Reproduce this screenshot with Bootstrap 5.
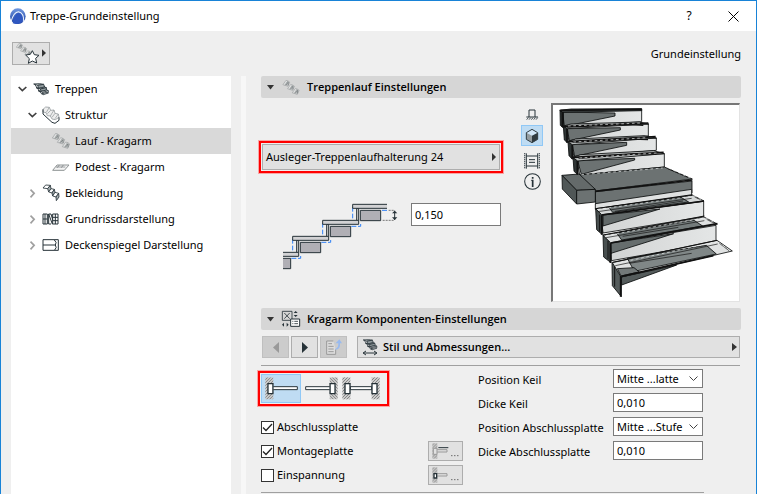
<!DOCTYPE html>
<html lang="de">
<head>
<meta charset="utf-8">
<meta name="viewport" content="width=device-width, initial-scale=1">
<title>Treppe-Grundeinstellung</title>
<link href="https://cdn.jsdelivr.net/npm/bootstrap@5.3.0/dist/css/bootstrap.min.css" rel="stylesheet">
<style>
body{font:11px/16px "Noto Sans","Open Sans",sans-serif;color:#000;background:#efefef}
button,input,select{font:inherit;color:inherit}
svg{display:block;flex:none;overflow:visible}
.dialog{border:solid #1883d7;border-width:1px 1px 0;overflow:hidden}
.titlebar{height:30px;padding:0 11px 0 9px;gap:4px}
.titlebar h1{font-size:11px;line-height:16px;margin:0}
.win-btn{width:24px;height:24px;border:0;background:none;padding:0;display:flex;align-items:center;justify-content:center;font-size:12px}
.toolbar{height:45px;padding:0 15px 0 11px}
.flat{background:#e1e1e1;border:1px solid #adadad;border-radius:0;padding:0;color:#000;font-size:11px;line-height:16px;display:flex;align-items:center}
.flat:disabled{background:#ccc;border-color:#bfbfbf;opacity:1}
.fav{width:38px;height:23px;padding-left:3px}
.panes{padding:0 15px 0 10px;gap:10px}
.tree{width:220px;background:#fff}
.tree button{width:100%;height:26px;border:0;background:none;padding:0 0 0 7px;display:flex;align-items:center;text-align:left;gap:5px}
.tree .lvl2{padding-left:17px}
.tree .lvl3{padding-left:41px}
.tree .lvl3.chosen{background:#d9d9d9}
.splitter{width:5px;background:#f7f7f7}
.settings{padding-left:5px}
.section-head,.comp-bar .style-btn{font-family:"Open Sans","Noto Sans",sans-serif;font-weight:600}
.section-head{height:22px;background:#d6d6d6;border:0;border-radius:2px;width:100%;padding:0 5px;display:flex;align-items:center;gap:7px}
.run{height:210px;padding:5px 1px 0 0;gap:8px}
.run-left{padding-top:38px}
.marked{border:2px solid #f00;box-shadow:0 0 0 1px #f9a5a5;padding:1px;margin-left:-2px}
.picker{width:238px;height:26px;padding:0 3px;justify-content:space-between}
.picker-frame{width:244px}
.height-row{padding:30px 0 0 20px;gap:12px}
.field{width:90px;height:19px;border:1px solid #7a7a7a;border-radius:0;background-color:#fff;padding:0 3px;color:#000;font-size:11px;line-height:16px}
.field.tall{height:23px}
select.field{background-size:9px 6px;background-position:right 4px center;padding-right:14px;
background-image:url("data:image/svg+xml,%3Csvg xmlns='http://www.w3.org/2000/svg' viewBox='0 0 9 6'%3E%3Cpath d='M.5 .5 4.500 4.500 8.500 .5' fill='none' stroke='%23444'/%3E%3C/svg%3E")}
.views{width:22px;padding-top:1px}
.views button{width:22px;height:21px;border:1px solid transparent;background:none;padding:0;display:flex;align-items:center;justify-content:center}
.views button.chosen,.ends button.chosen{background:#bfdcf3;border-color:#90c8f6}
.preview{height:199px;width:189px;background:#fff;border:2px solid #777;border-right-color:#e3e3e3;border-bottom-color:#e3e3e3;border-right-width:1px;border-bottom-width:1px}
.comp-bar{height:35px;padding:6px 1px 0 1px;gap:2px;align-items:flex-start}
.comp-bar .step{width:27px;height:22px;justify-content:center}
.comp-bar .style-btn{height:22px;margin-left:8px;padding:0 2px 0 4px;gap:5px}
.rule{height:1px;background:#a0a0a0;margin-right:1px}
.comp{padding:3px 38px 0 0}
.ends{width:131px;height:35px;margin:2px 0 0 -3px}
.ends button{width:40px;height:29px;border:1px solid transparent;background:none;padding:0;display:flex;align-items:center;justify-content:center}
.checks{padding:9px 15px 0 0}
.check-row{height:24px}
.check-row label{padding-left:3px}
.check-row .form-check-input{width:13px;height:13px;margin:0;border:1px solid #333;border-radius:0;background-color:#fff}
.check-row .form-check-input:checked{background-size:11px 11px;background-image:url("data:image/svg+xml,%3Csvg xmlns='http://www.w3.org/2000/svg' viewBox='0 0 11 11'%3E%3Cpath d='M1 5.500 4 8.500 10 2' fill='none' stroke='%23222' stroke-width='1.300'/%3E%3C/svg%3E")}
.more{width:35px;height:20px;padding:0 2px 0 3px;justify-content:space-between}
.props{display:grid;grid-template-columns:135px 90px;grid-auto-rows:24px}
.props label{padding-top:3px;white-space:nowrap}
.last-rule{margin-right:37px;margin-top:5px}
</style>
<script src="https://cdn.jsdelivr.net/npm/bootstrap@5.3.0/dist/js/bootstrap.bundle.min.js"></script>
</head>
<body>
<svg width="0" height="0" class="position-absolute" aria-hidden="true">
<defs>
<pattern id="hatch" width="9" height="9" patternUnits="userSpaceOnUse"><rect width="9" height="9" fill="#ccc"/><path d="M-3 12 12-3M-3 3 3-3M6 12 12 6" stroke="#777" stroke-width="2.500"/></pattern>
<symbol id="arms" viewBox="0 0 54 48">
<g id="arm" fill="none" stroke="#9b9fa0" stroke-width="2" stroke-linejoin="round"><path d="M1 15 11 1 17 3 8 17Z" fill="#dfe1e1"/><path d="M17 3 23 7 17 20 8 17Z" fill="#c6c9c9"/><path d="M11 16 18 7V17" stroke="#656c6e"/></g>
<use href="#arm" x="15" y="13"/><use href="#arm" x="30" y="26"/>
</symbol>
<symbol id="open" viewBox="0 0 27 18"><path d="M2 3 13 14 25 3" fill="none" stroke="#404040" stroke-width="5"/></symbol>
<symbol id="closed" viewBox="0 0 18 27"><path d="M3 2 14 13 3 25" fill="none" stroke="#a0a0a0" stroke-width="5"/></symbol>
<symbol id="flight" viewBox="0 0 48 39"><g fill="#d3d8d9" stroke="#263238" stroke-width="2.500" stroke-linejoin="round"><path d="M2 3 20 2 32 4 14 7Z"/><path d="M14 7 32 4 35 12 17 16Z" fill="#929c9f"/><path d="M9 14 17 16 35 12 40 14 22 18Z"/><path d="M22 18 40 14 41 21 24 25Z" fill="#929c9f"/><path d="M15 23 24 25 41 21 46 23 29 28Z"/><path d="M25 32 42 28 46 30 31 35Z"/><path d="M29 28 31 34M46 23V29M5 4 24 31" fill="none"/></g></symbol>
<symbol id="wallbeam" viewBox="0 0 100 69"><rect x="1" y="1" width="24" height="66" fill="url(#hatch)"/><path d="M25 29H98V38H25" fill="#fff" stroke="#263238" stroke-width="3"/><path d="M9 20H24V50H9Z" fill="#fff" stroke="#263238" stroke-width="4"/></symbol>
</defs>
</svg>

<div class="dialog d-flex flex-column min-vh-100">
<header class="titlebar d-flex align-items-center bg-white">
<svg width="16" height="16" viewBox="29 20 47 47" aria-hidden="true"><defs><linearGradient id="lg" x2="0" y2="1"><stop stop-color="#6f97e0"/><stop offset="1" stop-color="#1c409f"/></linearGradient></defs><circle cx="52" cy="44" r="23" fill="url(#lg)"/><path d="M32 60C37 42 43 32 54 31 66 34 70 47 68 61" fill="none" stroke="#f3f8ff" stroke-width="3"/><path d="M37 65C40 49 45 37 54 34 64 37 68 49 66 60 56 69 46 67 37 65Z" fill="#2f57c0"/></svg>
<h1 class="fw-normal flex-grow-1">Treppe-Grundeinstellung</h1>
<button class="win-btn" type="button" aria-label="Hilfe"><span>?</span></button>
<button class="win-btn ms-3" type="button" aria-label="Schließen"><svg width="11" height="11" viewBox="0 0 11 11"><path d="m.5.5 10 10m0-10-10 10" stroke="#000" fill="none"/></svg></button>
</header>

<div class="toolbar d-flex align-items-center justify-content-between">
<button class="flat fav" type="button" aria-label="Favoriten"><svg width="31" height="21" viewBox="48 130 93 63"><use href="#arms" x="48" y="130" width="46" height="41"/><path d="m97 153 6 12 14 2-10 9 3 14-13-6-12 7 3-14-11-11 14-2Z" fill="#fff" stroke="#263238" stroke-width="3"/><path d="m126 149 12 11-12 11Z" fill="#333"/></svg></button>
<span>Grundeinstellung</span>
</div>

<div class="panes d-flex flex-grow-1">
<nav class="tree flex-shrink-0" aria-label="Einstellungen">
<ul class="list-unstyled mb-0">
<li><button type="button"><svg width="9" height="6"><use href="#open"/></svg><svg width="18" height="13"><use href="#flight"/></svg>Treppen</button>
<ul class="list-unstyled">
<li><button class="lvl2" type="button"><svg width="9" height="6"><use href="#open"/></svg>
<svg width="18" height="18" viewBox="125 319 54 54"><path d="m128 329 8-7 11 1 4 9 10-1 3 10 10 2 2 10-11 7-10-2-5-9-9-1-4-9-9-2Z" fill="#eee" stroke="#9aa0a2" stroke-width="2.500"/><path d="m147 323-9 15m13-6-10 10m20-11-11 18m14-8-9 12m19-10-10 14" fill="none" stroke="#8b9294" stroke-width="2"/><path d="M128 329V343L155 368 164 371 176 362V353" fill="none" stroke="#263238" stroke-width="3"/></svg>Struktur</button>
<ul class="list-unstyled">
<li><button class="lvl3 chosen" type="button" aria-current="true"><svg width="18" height="16"><use href="#arms"/></svg>Lauf - Kragarm</button></li>
<li><button class="lvl3" type="button"><svg width="18" height="9" viewBox="0 0 54 27"><path d="M2 22 15 6 51 6 37 22Z" fill="#f3f3f3" stroke="#8f9495" stroke-width="3"/><path d="m16 14 6-8m6 8 6-8M12 12H40" stroke="#6c7375" stroke-width="2"/></svg>Podest - Kragarm</button></li>
</ul></li>
<li><button class="lvl2" type="button"><svg width="9" height="9"><use href="#closed"/></svg><svg width="18" height="18" viewBox="125 178 54 54"><g fill="#fff" stroke="#263238" stroke-width="2.500" stroke-linejoin="round"><path d="M128 190 136 181 150 182 142 192Z"/><path d="M150 182 152 192 145 202 142 192Z" fill="#a9b1b3"/><path d="M145 202 152 192 162 194 155 205Z"/><path d="M162 194 164 203 157 214 155 205Z" fill="#a9b1b3"/><path d="M157 214 164 203 175 206 167 217Z"/><path d="M175 206 176 217 168 228 167 217Z" fill="#a9b1b3"/></g></svg>Bekleidung</button></li>
<li><button class="lvl2" type="button"><svg width="9" height="9"><use href="#closed"/></svg><svg width="18" height="12" viewBox="0 0 54 36"><path d="M3 3H16V33H3ZM3 18H16M9 3V33M20 3 31 33H48V3H32V33M20 3V33H27M32 13H48M32 23H48M40 3V33M20 3H27L32 20" fill="none" stroke="#263238" stroke-width="3"/></svg>Grundrissdarstellung</button></li>
<li><button class="lvl2" type="button"><svg width="9" height="9"><use href="#closed"/></svg><svg width="18" height="12" viewBox="0 0 54 36"><path d="M3 2H49V34H3ZM3 18H40M37 3Q46 10 40 18 46 26 38 33" fill="#fff" stroke="#263238" stroke-width="3"/></svg>Deckenspiegel Darstellung</button></li>
</ul></li>
</ul>
</nav>
<div class="splitter flex-shrink-0"></div>

<main class="settings flex-grow-1">
<button class="section-head" type="button" aria-expanded="true"><svg width="9" height="5" viewBox="0 0 9 5"><path d="M1 0H8L4.500 4.500Z" fill="#333"/></svg><svg width="18" height="15"><use href="#arms"/></svg>Treppenlauf Einstellungen</button>
<section class="run d-flex">
<div class="run-left flex-grow-1">
<div class="marked picker-frame"><button class="flat picker" type="button">Ausleger-Treppenlaufhalterung 24<svg width="4" height="8" viewBox="0 0 4 8"><path d="M0 0 4 4 0 8Z" fill="#333"/></svg></button></div>
<div class="height-row d-flex">
<svg width="118" height="67" viewBox="63 39 354 201" aria-hidden="true">
<path d="M278 51V92M188 99V140M98 147V188" stroke="#2f80f5" stroke-width="3" stroke-dasharray="14 6" fill="none"/>
<path d="M366 61H381M274 109H302V100M184 157H212V148M94 205H122V196" stroke="#2f80f5" stroke-width="3" stroke-dasharray="15 5" fill="none"/>
<g fill="#b0afb5" stroke="#263238" stroke-width="3"><path d="M301 61H362V92H301ZM211 109H272V140H211ZM121 157H182V188H121ZM69 205H92V236H69"/></g>
<g fill="#d2d2d4" stroke="#263238" stroke-width="3"><path d="M290 55H296V92H290ZM200 103H206V140H200ZM110 151H116V188H110Z"/><path d="M381 43H278V55H381M188 91H296V103H188ZM98 139H206V151H98ZM69 187H116V199H69"/></g>
<path d="M386 61H402M368 91H402" stroke="#777" stroke-width="3" stroke-dasharray="6 3"/><path d="M404 62V90" stroke="#263238" stroke-width="3"/><path d="m396 70 8-8 8 8Zm0 12 8 8 8-8Z" fill="#263238"/></svg>
<input class="field tall" id="height" type="text" value="0,150" aria-label="Höhe">
</div>
</div>
<div class="d-flex flex-column views" role="group" aria-label="Ansicht">
<button type="button" aria-label="Schnitt"><svg width="12" height="11" viewBox="78 43 36 33"><path d="M87 67V46H105V67M79 67H114" fill="none" stroke="#263238" stroke-width="3"/><path d="m80 75 5-6m2 6 5-6m2 6 5-6m2 6 5-6m2 6 5-6" stroke="#263238" stroke-width="2.500"/></svg></button>
<button type="button" class="chosen" aria-label="3D"><svg width="12" height="14" viewBox="77 102 36 42"><path d="M78 113 95 103 112 113 95 122Z" fill="#d1e6f8"/><path d="M78 113 95 122V143L78 133Z" fill="#949ca0"/><path d="M112 113V133L95 143V122Z" fill="#303b40"/><path d="M78 113 95 103 112 113V133L95 143 78 133Z" fill="none" stroke="#303b40" stroke-width="3"/></svg></button>
<button class="mt-1" type="button" aria-label="Animation"><svg width="16" height="16" viewBox="72 167 48 48"><path d="M80 176H112M80 206H112M87 187H105M87 195H105" stroke="#263238" stroke-width="3"/><path d="M74 168V214M118 168V214" stroke="#263238" stroke-width="4" stroke-dasharray="3 3"/><path d="M79 168V214M113 168V214" stroke="#263238" stroke-width="3"/></svg></button>
<button type="button" aria-label="Info"><svg width="17" height="17" viewBox="71 230 50 50"><circle cx="96" cy="255" r="23" fill="none" stroke="#263238" stroke-width="3"/><path d="M94 242H99V247H94ZM93 250H99V271H94V253H91Z" fill="#263238"/></svg></button>
</div>
<div class="preview flex-shrink-0">
<svg width="100%" height="100%" viewBox="159 30 558 588" role="img" aria-label="Treppenvorschau">
<defs><linearGradient id="white-face"><stop stop-color="#d2d4d4"/><stop offset="1" stop-color="#e4e6e6"/></linearGradient></defs>
<g stroke="#080b0b" stroke-width="2.500" stroke-linejoin="round">
<path d="M187 48 425 43V80L193 96Z" fill="url(#white-face)"/><path d="M188 51 345 54V63L193 94Z" fill="#6c7272"/><path d="M180 46 190 52V99L181 91Z" fill="#303636"/><path d="M179 46 213 42 425 41V47L188 52Z" fill="#4a5050"/>
<path d="M200 97 445 87V123L207 140Z" fill="url(#white-face)"/><path d="M202 101 361 98V105L208 137Z" fill="#6c7272"/><path d="M190 93 202 101V143L193 135Z" fill="#303636"/><path d="M190 93 213 87 417 81 446 87 202 101Z" fill="#b9bdbd"/>
<path d="M215 145 469 129V166L222 187Z" fill="url(#white-face)"/><path d="M217 149 380 142V151L224 184Z" fill="#6c7272"/><path d="M204 140 217 149V193L207 182Z" fill="#303636"/><path d="M203 140 227 132 432 122 469 129 217 149Z" fill="#b9bdbd"/>
<path d="M231 194 493 176V216L239 240Z" fill="url(#white-face)"/><path d="M233 197 404 190V195L244 238Z" fill="#6c7272"/><path d="M219 187 234 197V239L222 229Z" fill="#303636"/><path d="M218 187 242 179 460 167 493 176 233 198Z" fill="#b9bdbd"/>
<path d="M286 290 576 258V294L287 329Z" fill="#6c7272"/><path d="M286 326 575 283V301L286 343Z" fill="#dfe1e1"/><path d="M237 240 493 216 577 252 286 288Z" fill="#6c7272"/><path d="M186 241 237 237 286 283 230 286Z" fill="#646a6a"/><path d="M186 241 230 286V327L187 282Z" fill="#505757"/><path d="M230 286 286 283V321L230 327Z" fill="#6c7272"/>
<path d="M303 359 611 319V365L309 414Z" fill="url(#white-face)"/><path d="M309 360 480 342 309 393Z" fill="#626969"/><path d="M287 341 307 362V419L290 404Z" fill="#484f4f"/><path d="M287 341 578 301 612 318 305 359Z" fill="#d5d8d8"/><path d="M326 336 543 307 566 321 338 352Z" fill="#747b7b"/>
<path d="M332 444 648 391V442L334 497Z" fill="url(#white-face)"/><path d="M332 444 521 416 333 475Z" fill="#666d6d"/><path d="M309 420 333 446V503L311 486Z" fill="#484f4f"/><path d="M309 421 612 366 652 387 332 443Z" fill="#dee0e0"/><path d="M350 414 582 376 608 393 365 435Z" fill="#747b7b"/>
<path d="M336 503 364 535V605L337 572Z" fill="#555c5c"/><path d="M364 546 530 510 365 570Z" fill="#555c5c"/><path d="M337 503 651 436 697 468 363 546Z" fill="#e0e2e2"/><path d="M382 490 619 451 649 477 403 529Z" fill="#808787"/><path d="M352 521 402 518 418 531 363 543Z" fill="#737979"/>
</g>
<g fill="none" stroke="#111" stroke-width="2"><path d="M181 46 425 43M191 94 445 84M205 140 467 125M219 187 491 172" stroke-width="5"/><path d="M287 341 577 299M309 420 613 363M337 502 651 436" stroke-width="3"/><path d="M187 51V96M201 101V143M217 149V191M232 198V239M305 361V419M331 445V504M362 543V605" stroke-width="5"/><path d="M299 359V410M324 438V493M344 514V575" stroke-width="3"/><path d="M286 289 577 255M306 360 612 318M333 444 652 386M364 544 640 482" stroke-width="5"/><path d="m345 349 204-31M368 424 535 397M388 505 575 475M503 221 568 249M584 306 604 315M620 373 643 385M657 444 687 467M293 350 575 310M318 428 613 377M346 512 653 447"/><path d="M200 96 386 88 430 91M218 142 398 132 444 134M236 190 416 176 469 178" stroke-width="4"/></g>
<g fill="none" stroke="#edf0f0" stroke-width="2" stroke-dasharray="8 8"><path d="M204 93 424 84M220 141 443 128M238 189 470 174M244 239 488 219M294 343 582 303M318 422 610 369M345 506 649 441M505 219 571 249M582 303 605 315M618 369 645 384M655 442 688 465"/></g>
</svg>
</div>
</section>

<button class="section-head" type="button" aria-expanded="true"><svg width="9" height="5" viewBox="0 0 9 5"><path d="M1 0H8L4.500 4.500Z" fill="#333"/></svg><svg width="18" height="16" viewBox="96 33 54 48"><path d="M97 34H126V61H97ZM103 39 119 56M119 39 103 56" fill="none" stroke="#263238" stroke-width="2.500"/><path d="m131 39 6-6 6 6Zm0 6 6 6 6-6ZM102 68 96 74 102 80ZM110 68 116 74 110 80Z" fill="#263238"/><path d="M122 57H149V79H122Z" fill="#fff" stroke="#263238" stroke-width="3"/><path d="M127 64H130M133 64H144M127 71H130M133 71H144" stroke="#263238" stroke-width="2.500"/></svg><span>Kragarm Komponenten-Einstellungen</span></button>
<div class="comp-bar d-flex">
<button class="flat step" type="button" disabled aria-label="Zurück"><svg width="6" height="11" viewBox="0 0 6 11"><path d="M6 0V11L0 5.500Z" fill="#999"/></svg></button>
<button class="flat step" type="button" aria-label="Weiter"><svg width="6" height="11" viewBox="0 0 6 11"><path d="M0 0V11L6 5.500Z" fill="#263238"/></svg></button>
<button class="flat step" type="button" disabled aria-label="Übertragen"><svg width="16" height="16" viewBox="225 117 48 48"><path d="M247 123H227V163H254V148" fill="#ddd" stroke="#999" stroke-width="3"/><path d="M232 131H243M232 139H248M232 147H248M232 155H248" stroke="#999" stroke-width="3"/><path d="M253 146Q263 144 262 130H254L265 118 273 130H267Q269 149 253 149Z" fill="#98baf0"/></svg></button>
<button class="flat style-btn flex-grow-1" type="button"><svg width="16" height="17"><use href="#flight" width="16" height="12"/><path d="M2 14H14M4 12 1 14 4 16M12 12 15 14 12 16" fill="none" stroke="#263238"/></svg><span class="flex-grow-1 text-start">Stil und Abmessungen...</span><svg width="5" height="8" viewBox="0 0 5 8"><path d="M0 0 5 4 0 8Z" fill="#333"/></svg></button>
</div>
<div class="rule"></div>
<section class="comp d-flex">
<div class="flex-grow-1">
<div class="marked ends d-flex" role="group" aria-label="Auflager">
<button class="chosen" type="button" aria-label="Links"><svg width="33" height="23"><use href="#wallbeam"/></svg></button>
<button type="button" aria-label="Rechts"><svg width="33" height="23"><use href="#wallbeam" transform="matrix(-1 0 0 1 33 0)"/></svg></button>
<button type="button" aria-label="Beidseitig"><svg width="38" height="23" viewBox="0 0 114 69"><rect x="1" y="1" width="24" height="66" fill="url(#hatch)"/><rect x="89" y="1" width="24" height="66" fill="url(#hatch)"/><path d="M25 29H89V38H25Z" fill="#fff" stroke="#263238" stroke-width="3"/><path d="M9 20H24V50H9ZM90 20H105V50H90Z" fill="#fff" stroke="#263238" stroke-width="4"/></svg></button>
</div>
<div class="checks">
<div class="check-row d-flex align-items-center"><input class="form-check-input" type="checkbox" id="c1" checked><label for="c1">Abschlussplatte</label></div>
<div class="check-row d-flex align-items-center"><input class="form-check-input" type="checkbox" id="c2" checked><label for="c2" class="flex-grow-1">Montageplatte</label><button class="flat more" type="button" aria-label="Montageplatte Optionen"><svg width="28" height="16" viewBox="545 131 84 48"><rect x="546" y="132" width="15" height="46" fill="url(#hatch)"/><path d="M561 151H590V158H561M549 147H560V165H549Z" fill="#e1e1e1" stroke="#999" stroke-width="3"/><path d="M564 145H594" stroke="#263238" stroke-width="3"/><path d="M603 169H606M612 169H615M621 169H624" stroke="#333" stroke-width="3"/></svg></button></div>
<div class="check-row d-flex align-items-center"><input class="form-check-input" type="checkbox" id="c3"><label for="c3" class="flex-grow-1">Einspannung</label><button class="flat more" type="button" aria-label="Einspannung Optionen"><svg width="28" height="16" viewBox="545 203 84 48"><rect x="546" y="204" width="15" height="46" fill="url(#hatch)"/><path d="M561 223H590V230H561" fill="#e1e1e1" stroke="#999" stroke-width="3"/><path d="M551 223H559V236H551Z" fill="#fff" stroke="#263238" stroke-width="4"/><path d="M603 241H606M612 241H615M621 241H624" stroke="#333" stroke-width="3"/></svg></button></div>
</div>
</div>
<div class="props">
<label for="p1">Position Keil</label><select class="form-select field" id="p1"><option>Mitte ...latte</option></select>
<label for="p2">Dicke Keil</label><input class="field" id="p2" type="text" value="0,010">
<label for="p3">Position Abschlussplatte</label><select class="form-select field" id="p3"><option>Mitte ...Stufe</option></select>
<label for="p4">Dicke Abschlussplatte</label><input class="field" id="p4" type="text" value="0,010">
</div>
</section>
<div class="rule last-rule"></div>
</main>
</div>
</div>
</body>
</html>
